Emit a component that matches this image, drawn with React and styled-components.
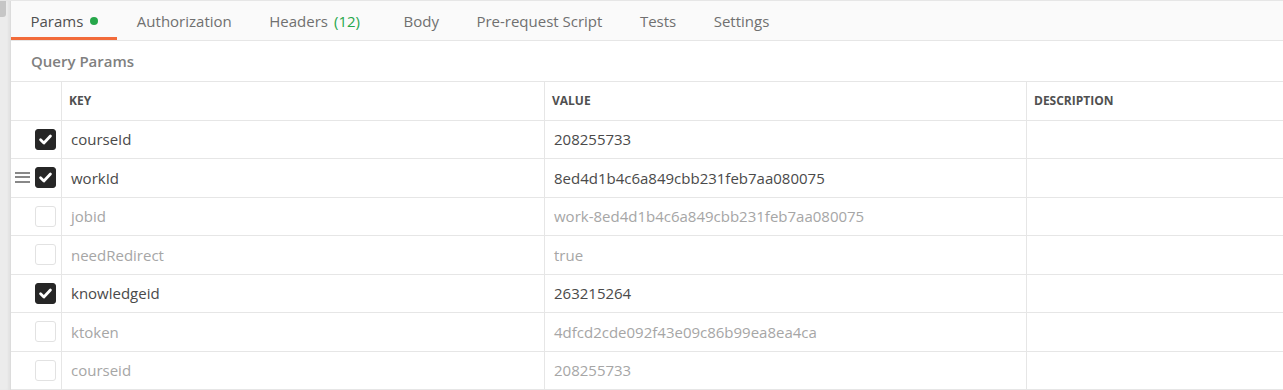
import React from "react";
import styled, { createGlobalStyle } from "styled-components";

const GlobalStyle = createGlobalStyle`
  html, body {
    margin: 0;
    padding: 0;
    background: #fff;
    font-family: "Open Sans", "Noto Sans", sans-serif;
  }
  * {
    box-sizing: border-box;
  }
`;

const tabs = [
  { label: "Params", dot: true, active: true },
  { label: "Authorization" },
  { label: "Headers", count: "(12)" },
  { label: "Body" },
  { label: "Pre-request Script" },
  { label: "Tests" },
  { label: "Settings" },
];

const params = [
  { key: "courseId", value: "208255733", on: true },
  { key: "workId", value: "8ed4d1b4c6a849cbb231feb7aa080075", on: true, hover: true },
  { key: "jobid", value: "work-8ed4d1b4c6a849cbb231feb7aa080075" },
  { key: "needRedirect", value: "true" },
  { key: "knowledgeid", value: "263215264", on: true },
  { key: "ktoken", value: "4dfcd2cde092f43e09c86b99ea8ea4ca" },
  { key: "courseid", value: "208255733" },
];

function App() {
  return (
    <>
      <GlobalStyle />
      <Page>
        <Gutter>
          <Thumb />
        </Gutter>
        <Main>
          <TabBar>
            {tabs.map((t) => (
              <Tab key={t.label} $active={t.active}>
                {t.label}
                {t.count && <Count>{t.count}</Count>}
                {t.dot && <Dot />}
              </Tab>
            ))}
          </TabBar>
          <SectionTitle>Query Params</SectionTitle>
          <Table>
            <HeadRow>
              <CheckCell />
              <HeadCell>KEY</HeadCell>
              <HeadCell>VALUE</HeadCell>
              <HeadCell>DESCRIPTION</HeadCell>
            </HeadRow>
            {params.map((p) => (
              <Row key={p.key}>
                <CheckCell>
                  {p.hover && <Handle />}
                  <Checkbox $on={p.on}>
                    {p.on && (
                      <svg width="15" height="15" viewBox="0 0 14 14">
                        <path
                          d="M2.4 7.3 L5.5 10.3 L11.6 3.7"
                          fill="none"
                          stroke="#fff"
                          strokeWidth="2.6"
                          strokeLinecap="round"
                          strokeLinejoin="round"
                        />
                      </svg>
                    )}
                  </Checkbox>
                </CheckCell>
                <Cell $on={p.on}>{p.key}</Cell>
                <Cell $on={p.on}>{p.value}</Cell>
                <Cell />
              </Row>
            ))}
          </Table>
        </Main>
      </Page>
    </>
  );
}

export default App;

const Page = styled.div`
  display: flex;
  width: 1283px;
  height: 390px;
  overflow: hidden;
  border-top: 1px solid #e6e6e6;
`;

const Gutter = styled.div`
  width: 11px;
  flex: none;
  background: #ececec;
  border-right: 1px solid #dcdcdc;
  box-shadow: inset -2px 0 2px rgba(0, 0, 0, 0.04);
`;

const Thumb = styled.div`
  width: 6px;
  height: 17px;
  margin-top: -1px;
  background: #c6c6c6;
  border-radius: 0 0 3px 0;
`;

const Main = styled.div`
  flex: 1;
  display: flex;
  flex-direction: column;
  min-width: 0;
`;

const TabBar = styled.div`
  display: flex;
  height: 41px;
  background: #fafafa;
  border-bottom: 1px solid #e6e6e6;
`;

const Tab = styled.div`
  display: flex;
  align-items: center;
  padding: 0 18px 0 19.5px;
  font-size: 15px;
  color: ${({ $active }) => ($active ? "#505050" : "#707070")};
  box-shadow: ${({ $active }) => ($active ? "inset 0 -3px 0 #f26b3a" : "none")};
  white-space: nowrap;
`;

const Count = styled.span`
  margin: 0 6px 0 6px;
  color: #26a74a;
`;

const Dot = styled.span`
  width: 8px;
  height: 8px;
  margin: 0 1px 0 7px;
  border-radius: 50%;
  background: #26a74a;
`;

const SectionTitle = styled.div`
  height: 41px;
  display: flex;
  align-items: center;
  padding-left: 20px;
  font-size: 15px;
  font-weight: 600;
  color: #808080;
  border-bottom: 1px solid #e6e6e6;
`;

const Table = styled.div`
  display: flex;
  flex-direction: column;
`;

const Row = styled.div`
  display: grid;
  grid-template-columns: 51px 483px 482px 1fr;
  height: 38.5px;
  border-bottom: 1px solid #e6e6e6;
`;

const HeadRow = styled(Row)`
  height: 39px;
`;

const CheckCell = styled.div`
  display: flex;
  align-items: center;
  justify-content: flex-end;
  gap: 5px;
  padding-right: 5px;
  border-right: 1px solid #e6e6e6;
`;

const Cell = styled.div`
  display: flex;
  align-items: center;
  padding-left: 9px;
  font-size: 15px;
  color: ${({ $on }) => ($on ? "#4a4a4a" : "#a6a6a6")};
  border-right: 1px solid #e6e6e6;
  white-space: nowrap;
  &:last-child {
    border-right: none;
  }
`;

const HeadCell = styled(Cell)`
  font-size: 12px;
  font-weight: 700;
  color: #505050;
  padding-left: 7px;
`;

const Checkbox = styled.div`
  width: 21px;
  height: 21px;
  border-radius: 3px;
  display: flex;
  align-items: center;
  justify-content: center;
  background: ${({ $on }) => ($on ? "#262626" : "#fff")};
  border: 1px solid ${({ $on }) => ($on ? "#262626" : "#e2e2e2")};
`;

const Handle = styled.div`
  width: 15px;
  height: 11px;
  background: linear-gradient(
    #888 0 2px,
    transparent 2px 4.5px,
    #888 4.5px 6.5px,
    transparent 6.5px 9px,
    #888 9px 11px
  );
`;
